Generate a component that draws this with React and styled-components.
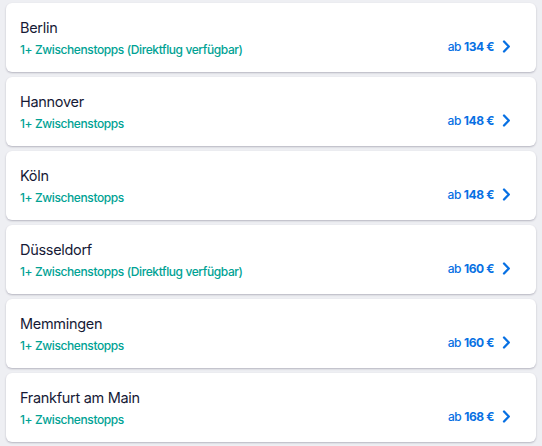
import React from "react"
import styled, { createGlobalStyle } from "styled-components"

const GlobalStyle = createGlobalStyle`
  body {
    margin: 0;
    background: #eeeff3;
    font-family: Inter, "Noto Sans", sans-serif;
  }
`

const List = styled.div`
  display: flex;
  flex-direction: column;
  gap: 5px;
  padding: 3px 6px;
`

const Card = styled.div`
  display: flex;
  align-items: flex-end;
  justify-content: space-between;
  height: 69px;
  box-sizing: border-box;
  padding: 0 25px 15px 14px;
  background: #fff;
  border-radius: 6px;
  box-shadow: 0 1px 2px rgba(37, 32, 61, 0.28);
`

const Info = styled.div`
  display: flex;
  flex-direction: column;
  gap: 5px;
`

const City = styled.div`
  font-size: 14.5px;
  letter-spacing: -0.3px;
  color: #161a36;
  line-height: 19px;
`

const Stops = styled.div`
  font-size: 12px;
  font-weight: 500;
  letter-spacing: -0.4px;
  color: #00a294;
  line-height: 15px;
`

const Price = styled.div`
  display: flex;
  align-items: center;
  gap: 8px;
  color: #0770e3;
  font-size: 12px;
  font-weight: 500;
  letter-spacing: -0.4px;
  margin-bottom: 3px;
`

const Amount = styled.span`
  font-weight: 700;
`

const destinations = [
  { city: "Berlin", stops: "1+ Zwischenstopps (Direktflug verfügbar)", price: 134 },
  { city: "Hannover", stops: "1+ Zwischenstopps", price: 148 },
  { city: "Köln", stops: "1+ Zwischenstopps", price: 148 },
  { city: "Düsseldorf", stops: "1+ Zwischenstopps (Direktflug verfügbar)", price: 160 },
  { city: "Memmingen", stops: "1+ Zwischenstopps", price: 160 },
  { city: "Frankfurt am Main", stops: "1+ Zwischenstopps", price: 168 },
]

const Chevron = () => (
  <svg width="9" height="13" viewBox="0 0 9 13">
    <path d="M2 1.5 L6.8 6.5 L2 11.5" fill="none" stroke="#0770e3" strokeWidth="2.3" strokeLinecap="round" strokeLinejoin="round" />
  </svg>
)

export default function App() {
  return (
    <>
      <GlobalStyle />
      <List>
        {destinations.map(d => (
          <Card key={d.city}>
            <Info>
              <City>{d.city}</City>
              <Stops>{d.stops}</Stops>
            </Info>
            <Price>
              <span>
                ab <Amount>{d.price} €</Amount>
              </span>
              <Chevron />
            </Price>
          </Card>
        ))}
      </List>
    </>
  )
}
